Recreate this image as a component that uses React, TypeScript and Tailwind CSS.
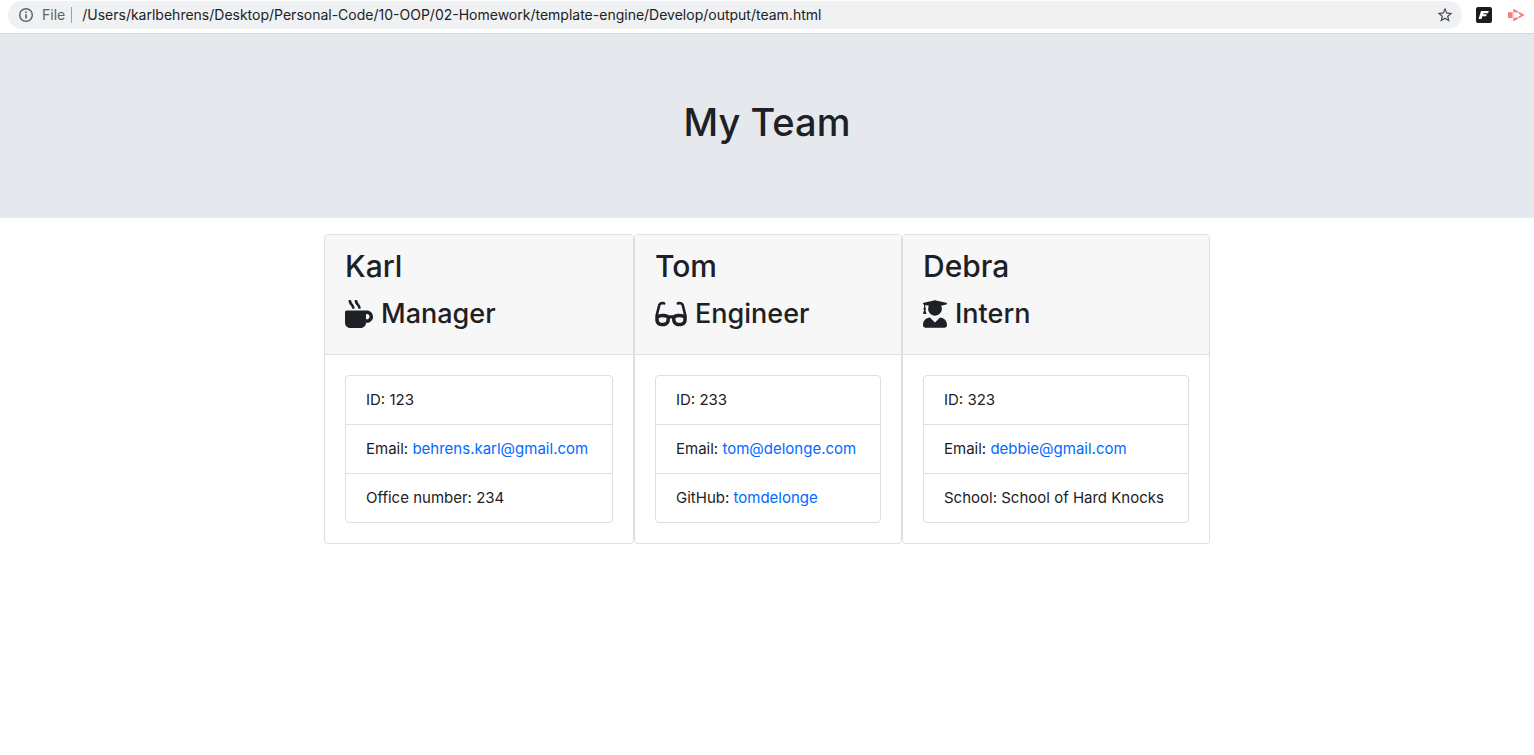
import type { ReactNode } from "react";
import { FaGlasses, FaMugHot, FaUserGraduate } from "react-icons/fa";
import { MdStarBorder } from "react-icons/md";

type Detail = { label: string; value: string; href?: string };
type Member = {
  name: string;
  role: string;
  icon: ReactNode;
  width: string;
  details: Detail[];
};

const team: Member[] = [
  {
    name: "Karl",
    role: "Manager",
    icon: <FaMugHot className="size-7" />,
    width: "basis-[310px]",
    details: [
      { label: "ID", value: "123" },
      { label: "Email", value: "behrens.karl@gmail.com", href: "mailto:behrens.karl@gmail.com" },
      { label: "Office number", value: "234" },
    ],
  },
  {
    name: "Tom",
    role: "Engineer",
    icon: <FaGlasses className="h-7 w-8" />,
    width: "basis-[268px]",
    details: [
      { label: "ID", value: "233" },
      { label: "Email", value: "tom@delonge.com", href: "mailto:tom@delonge.com" },
      { label: "GitHub", value: "tomdelonge", href: "https://github.com/tomdelonge" },
    ],
  },
  {
    name: "Debra",
    role: "Intern",
    icon: <FaUserGraduate className="h-7 w-6" />,
    width: "basis-[308px]",
    details: [
      { label: "ID", value: "323" },
      { label: "Email", value: "debbie@gmail.com", href: "mailto:debbie@gmail.com" },
      { label: "School", value: "School of Hard Knocks" },
    ],
  },
];

function InfoIcon() {
  return (
    <svg viewBox="0 0 16 16" className="size-4" fill="none" stroke="currentColor">
      <circle cx="8" cy="8" r="6.3" strokeWidth="1.5" />
      <path d="M8 7.2V11.4M8 4.5V6" strokeWidth="1.7" />
    </svg>
  );
}

function AddressBar() {
  return (
    <div className="flex items-center border-b border-[#d5d7da] bg-white pt-px pr-2 pb-1 pl-2">
      <div className="flex h-7 grow items-center rounded-full bg-[#eff1f3] pr-2 pl-2.5 text-sm">
        <button type="button" aria-label="View site information" className="flex items-center gap-2 text-[#5f6368]">
          <InfoIcon />
          <span>File</span>
        </button>
        <span className="ml-1.5 h-4 w-px bg-[#9aa0a6]" />
        <input
          type="text"
          aria-label="Address"
          defaultValue="/Users/karlbehrens/Desktop/Personal-Code/10-OOP/02-Homework/template-engine/Develop/output/team.html"
          className="ml-2.5 min-w-0 grow bg-transparent text-[#202124] outline-none"
        />
        <button type="button" aria-label="Bookmark this page" className="text-[#46494d]">
          <MdStarBorder className="size-[18px]" />
        </button>
      </div>
      <button type="button" aria-label="F extension" className="ml-3.5">
        <svg viewBox="0 0 16 16" className="size-4">
          <rect width="16" height="16" rx="2" fill="#1b1c1e" />
          <path d="M5 4H12.8L12 6.2H7.5L7.1 7.2H10.8L10 9.3H6.4L5.4 12H2.6Z" fill="#fff" />
        </svg>
      </button>
      <button type="button" aria-label="Recorder extension" className="ml-4">
        <svg viewBox="0 0 18 14" className="h-3.5 w-[18px]">
          <rect y="4.2" width="4.2" height="5.8" fill="#ff7b7b" />
          <path
            d="M5.2 4.2V0.8L9.8 3.1V5L7.4 4.2ZM10.6 3.5L16.6 7L10.6 10.6V8.4L13 7L10.6 5.7ZM9.8 11L5.2 13.4V9.8H7.4L9.8 9.1Z"
            fill="#ff7b7b"
          />
          <path d="M4.8 4.2V9.8" stroke="#ff7b7b" strokeWidth="0.8" />
        </svg>
      </button>
    </div>
  );
}

function MemberCard({ member }: { member: Member }) {
  return (
    <article className={`${member.width} rounded-[4px] border border-[#dfdfdf] bg-white`}>
      <header className="rounded-t-[3px] border-b border-[#dfdfdf] bg-[#f7f7f7] px-5 py-3 font-medium">
        <h2 className="mb-2 text-[30px] leading-[38px]">{member.name}</h2>
        <h3 className="mb-2 flex items-center gap-2 text-[27px] leading-[41px]">
          {member.icon}
          {member.role}
        </h3>
      </header>
      <div className="p-5">
        <ul className="divide-y divide-[#dfdfdf] rounded-[4px] border border-[#dfdfdf]">
          {member.details.map(({ label, value, href }) => (
            <li key={label} className="px-5 py-3 text-[15px] leading-6 whitespace-nowrap">
              {label}:{" "}
              {href ? (
                <a href={href} className="text-[#0069ff] hover:underline">
                  {value}
                </a>
              ) : (
                value
              )}
            </li>
          ))}
        </ul>
      </div>
    </article>
  );
}

export default function App() {
  return (
    <div className="min-h-screen bg-white font-['Inter','Liberation_Sans',sans-serif] text-base text-[#1d2125]">
      <AddressBar />
      <header className="mb-4 bg-[#e5e9ee] px-8 py-16">
        <h1 className="mb-2 text-center text-[38px] leading-[48px] font-medium">My Team</h1>
      </header>
      <main className="flex flex-wrap justify-center">
        {team.map((member) => (
          <MemberCard key={member.name} member={member} />
        ))}
      </main>
    </div>
  );
}
